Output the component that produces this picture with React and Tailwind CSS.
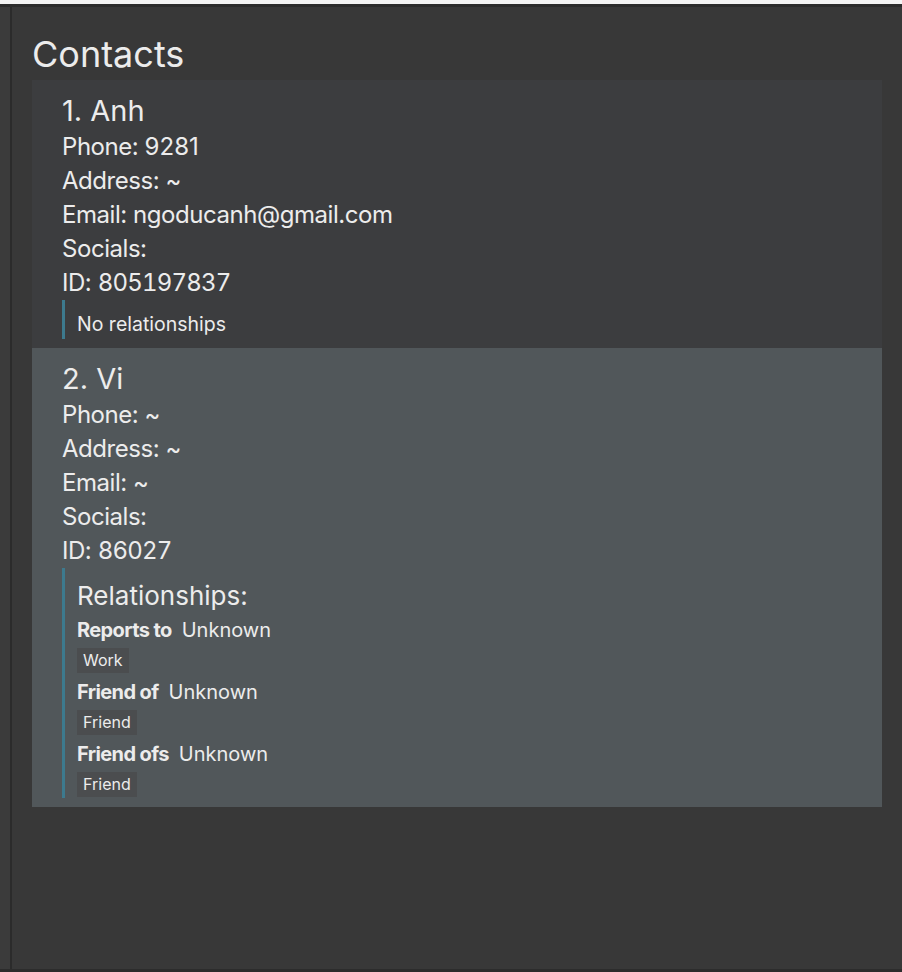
import React from 'react';

const contacts = [
  {
    name: 'Anh',
    phone: '9281',
    address: '~',
    email: 'ngoducanh@gmail.com',
    id: '805197837',
    relationships: [],
  },
  {
    name: 'Vi',
    phone: '~',
    address: '~',
    email: '~',
    id: '86027',
    relationships: [
      { label: 'Reports to', who: 'Unknown', tag: 'Work' },
      { label: 'Friend of', who: 'Unknown', tag: 'Friend' },
      { label: 'Friend ofs', who: 'Unknown', tag: 'Friend' },
    ],
  },
];

function ContactCard({ contact, index }) {
  const bg = index % 2 === 0 ? 'bg-[#3c3d3f]' : 'bg-[#51575a]';
  return (
    <div className={`${bg} pl-[30px] pt-[12px] pb-[9px] text-[#ececec]`}>
      <div className="text-[29px] leading-[38px]">{index + 1}. {contact.name}</div>
      <div className="text-[24px] leading-[34px] tracking-[-0.45px]">
        <div>Phone: <span className="tracking-normal">{contact.phone}</span></div>
        <div>Address: {contact.address}</div>
        <div>Email: {contact.email}</div>
        <div>Socials:</div>
        <div>ID: <span className="tracking-[-0.8px] tabular-nums">{contact.id}</span></div>
      </div>
      {contact.relationships.length === 0 ? (
        <div className="border-l-[3px] border-[#3d7a8e] pl-[12px] pt-[12px] pb-[2px]">
          <div className="text-[19.5px] leading-[25px]">No relationships</div>
        </div>
      ) : (
        <div className="border-l-[3px] border-[#3d7a8e] pl-[12px] pt-[6px] pb-[1px]">
          <div className="text-[26px] leading-[44px]">Relationships:</div>
          {contact.relationships.map((r, i) => (
            <div key={i} className={i === 0 ? '' : 'mt-[7px]'}>
              <div className="flex items-center gap-[10px] text-[20px] leading-[24px]">
                <span className="font-bold tracking-[-0.6px]">{r.label}</span>
                <span>{r.who}</span>
              </div>
              <div className="mt-[6px] flex">
                <span className="bg-[#4b4d4f] px-[6px] text-[16px] leading-[25px]">{r.tag}</span>
              </div>
            </div>
          ))}
        </div>
      )}
    </div>
  );
}

export default function App() {
  return (
    <div
      className="flex h-[972px] w-[902px] flex-col bg-[#f4f4f4]"
      style={{ fontFamily: 'Inter, "Noto Sans", sans-serif' }}
    >
      <div className="h-[4px] shrink-0" />
      <div className="flex flex-1 flex-col border-y-[3px] border-[#2c2c2c] bg-[#3a3a3a]">
        <div className="flex flex-1">
          <div className="w-[10px] shrink-0 bg-[#3b3b3b]" />
          <div className="flex-1 border-l-2 border-[#2b2b2b] bg-[#383838] px-[20px] pt-[25px]">
            <h1 className="mb-[4px] text-[36px] leading-[44px] text-[#ececec]">Contacts</h1>
            <div>
              {contacts.map((c, i) => (
                <ContactCard key={c.id} contact={c} index={i} />
              ))}
            </div>
          </div>
        </div>
      </div>
    </div>
  );
}
